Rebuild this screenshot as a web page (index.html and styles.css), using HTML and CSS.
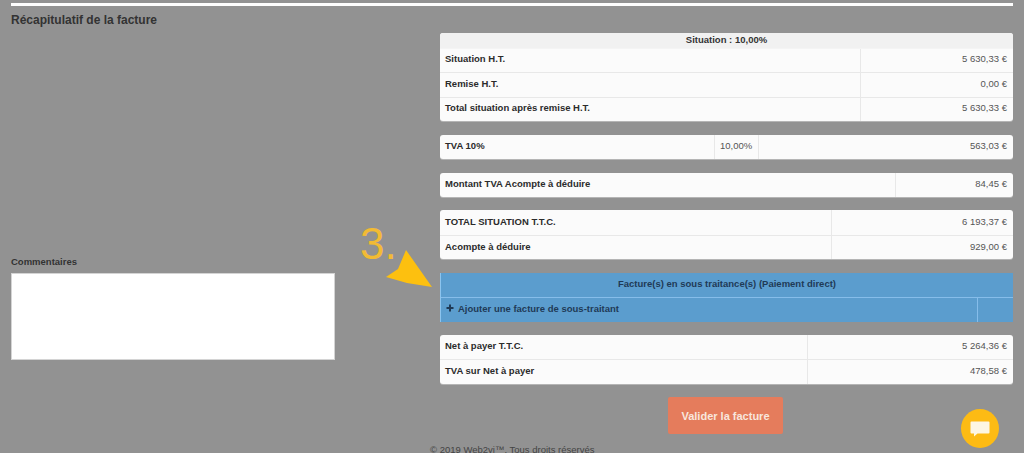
FILE: index.html
```html
<!DOCTYPE html>
<html lang="fr">
<head>
<meta charset="utf-8">
<title>Récapitulatif de la facture</title>
<link rel="stylesheet" href="styles.css">
</head>
<body>
<div class="page">
  <div class="topline"></div>
  <div class="columns">
    <div class="left">
      <h2 class="title">Récapitulatif de la facture</h2>
      <div class="comments">
        <label class="comments-label">Commentaires</label>
        <div class="textarea"></div>
      </div>
    </div>
    <div class="right">
      <div class="card">
        <div class="card-head">Situation : 10,00%</div>
        <div class="row row-first"><div class="label">Situation H.T.</div><div class="value w153">5 630,33 €</div></div>
        <div class="row"><div class="label">Remise H.T.</div><div class="value w153">0,00 €</div></div>
        <div class="row"><div class="label">Total situation après remise H.T.</div><div class="value w153">5 630,33 €</div></div>
      </div>
      <div class="card">
        <div class="row"><div class="label">TVA 10%</div><div class="pct">10,00%</div><div class="value w255">563,03 €</div></div>
      </div>
      <div class="card">
        <div class="row"><div class="label">Montant TVA Acompte à déduire</div><div class="value w118">84,45 €</div></div>
      </div>
      <div class="card">
        <div class="row"><div class="label">TOTAL SITUATION T.T.C.</div><div class="value w182">6 193,37 €</div></div>
        <div class="row"><div class="label">Acompte à déduire</div><div class="value w182">929,00 €</div></div>
      </div>
      <div class="card blue">
        <div class="row blue-head">Facture(s) en sous traitance(s) (Paiement direct)</div>
        <div class="row"><div class="label"><svg class="plus" width="8" height="8" viewBox="0 0 8 8"><path d="M4 0.500 V7.500 M0.500 4 H7.500" stroke="#1f3a56" stroke-width="2" fill="none"/></svg>Ajouter une facture de sous-traitant</div><div class="value w36"></div></div>
      </div>
      <div class="card">
        <div class="row"><div class="label">Net à payer T.T.C.</div><div class="value w206">5 264,36 €</div></div>
        <div class="row"><div class="label">TVA sur Net à payer</div><div class="value w206">478,58 €</div></div>
      </div>
      <div class="actions"><button class="submit" type="button">Valider la facture</button></div>
    </div>
  </div>
  <div class="footer">© 2019 Web2vi™. Tous droits réservés</div>
</div>
<div class="step-number">3.</div>
<svg class="step-arrow" width="50" height="40" viewBox="0 0 50 40"><path d="M0 27 L12 19 L20 0 L46 37 L21 33 Z" fill="#fdc00f"/></svg>
<div class="chat">
  <svg width="20" height="16" viewBox="0 0 20 16"><path d="M1.500 0.500 H18.500 Q19.500 0.500 19.500 1.500 V11.500 Q19.500 12.500 18.500 12.500 H7.500 L4 15.500 V12.500 H1.500 Q0.500 12.500 0.500 11.500 V1.500 Q0.500 0.500 1.500 0.500 Z" fill="#fdf6e3"/></svg>
</div>
</body>
</html>
```
FILE: styles.css
```css
* { box-sizing: border-box; }
html, body { margin: 0; height: 453px; overflow: hidden; }
body {
  background: #929292;
  font-family: "Liberation Sans", Arial, sans-serif;
  color: #2b2b2b;
}
.page { padding: 3px 11px 0; }
.topline { height: 3px; background: #fdfdfd; }
.columns { display: flex; gap: 105px; }
.left { width: 324px; display: flex; flex-direction: column; }
.title { margin: 7px 0 0; font-size: 12px; line-height: 14px; font-weight: bold; color: #333; }
.comments { margin-top: 229px; }
.comments-label { display: block; font-size: 9.5px; line-height: 12px; font-weight: bold; color: #333; }
.textarea { margin-top: 5px; height: 87px; background: #fff; border: 1px solid #d4d4d4; }
.right { width: 573px; padding-top: 27px; display: flex; flex-direction: column; gap: 13.5px; }
.card { background: #fbfbfb; border-radius: 3px; overflow: hidden; box-shadow: 0 1px 0 #b5b5b5; }
.card-head {
  height: 15px; line-height: 13px; text-align: center;
  font-size: 9.5px; font-weight: bold; background: #f1f1f1; color: #333;
}
.row { display: flex; height: 24.400px; font-size: 9.5px; border-top: 1px solid #e8e8e8; }
.row:first-child { border-top: 0; }
.row-first { border-top-color: #f4f4f4; }
.label { flex: 1; display: flex; align-items: center; padding: 0 5px 3px; font-weight: bold; white-space: pre; }
.value {
  display: flex; align-items: center; justify-content: flex-end;
  padding: 0 6px 3px; border-left: 1px solid #e8e8e8; color: #555;
}
.row-first .label, .row-first .value { padding-bottom: 5px; }
.pct { width: 44px; display: flex; align-items: center; padding: 0 5px 3px; border-left: 1px solid #e8e8e8; color: #555; }
.w36 { width: 36px; }
.w118 { width: 118px; }
.w153 { width: 153px; }
.w182 { width: 182px; }
.w206 { width: 206px; }
.w255 { width: 255px; }
.blue {
  background: #5b9dce; border-radius: 0; box-shadow: none;
  border-left: 1px solid #8cc4ee; color: #1f3a56;
}
.blue .row { border-top-color: #86bdea; }
.blue .value { border-left-color: #86bdea; }
.blue-head { align-items: center; justify-content: center; font-weight: bold; padding-bottom: 3px; }
.plus { margin-right: 4px; }
.actions { display: flex; justify-content: center; padding-right: 2px; }
.submit {
  width: 115px; height: 37px; border: 0; border-radius: 2px;
  background: #e57c5c; color: #f8e6dd;
  font-family: inherit; font-size: 11px; font-weight: bold;
}
.footer { margin: 10px 0 0 419px; font-size: 9.5px; line-height: 12px; color: #444; white-space: nowrap; }
.step-number {
  position: absolute; left: 360px; top: 219px;
  font-size: 44px; line-height: 50px; color: #f2bb34;
}
.step-arrow { position: absolute; left: 386px; top: 250px; }
.chat {
  position: absolute; left: 961px; top: 409px; width: 38px; height: 39px;
  border-radius: 50%; background: #fdbb14;
  display: flex; align-items: center; justify-content: center;
}
```
